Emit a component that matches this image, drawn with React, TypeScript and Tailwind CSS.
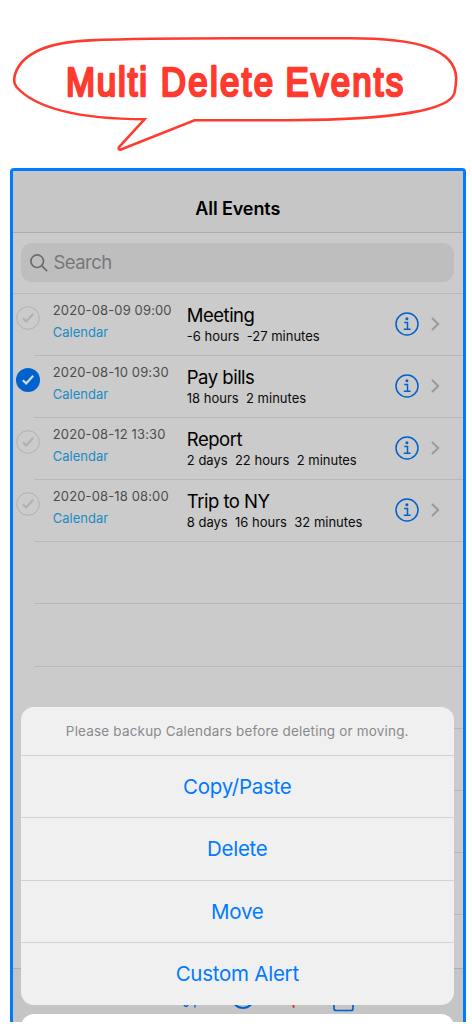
import React from 'react';

type CalendarEvent = {
  date: string;
  calendar: string;
  title: string;
  remaining: string;
  selected?: boolean;
};

const events: CalendarEvent[] = [
  { date: '2020-08-09 09:00', calendar: 'Calendar', title: 'Meeting', remaining: '-6 hours  -27 minutes' },
  { date: '2020-08-10 09:30', calendar: 'Calendar', title: 'Pay bills', remaining: '18 hours  2 minutes', selected: true },
  { date: '2020-08-12 13:30', calendar: 'Calendar', title: 'Report', remaining: '2 days  22 hours  2 minutes' },
  { date: '2020-08-18 08:00', calendar: 'Calendar', title: 'Trip to NY', remaining: '8 days  16 hours  32 minutes' },
];

const actions = ['Copy/Paste', 'Delete', 'Move', 'Custom Alert'];

const CheckMark: React.FC<{ selected?: boolean }> = ({ selected }) => (
  <svg width="24" height="24" viewBox="0 0 24 24" fill="none" className="shrink-0">
    {selected ? (
      <circle cx="12" cy="12" r="12" fill="#0062cd" />
    ) : (
      <circle cx="12" cy="12" r="11.3" stroke="#b1b1b3" strokeWidth="1" />
    )}
    <path d="M6.8 12.2 L10.2 15.4 L17.2 7.8" stroke={selected ? '#d5dbe2' : '#b1b1b1'} strokeWidth="2.2" />
  </svg>
);

const InfoIcon: React.FC = () => (
  <svg width="24" height="24" viewBox="0 0 24 24" fill="none" stroke="#0062cd" className="shrink-0">
    <circle cx="12" cy="12" r="11" strokeWidth="1.5" />
    <circle cx="11.9" cy="6.8" r="1.5" fill="#0062cd" stroke="none" />
    <path d="M9.2 10.4 H12.5 V17 M8.8 17.2 H15.6" strokeWidth="1.5" />
  </svg>
);

const Chevron: React.FC = () => (
  <svg width="9" height="14" viewBox="0 0 9 14" fill="none" className="shrink-0">
    <path d="M1 1 L7.2 7 L1 13" stroke="#9a9a9c" strokeWidth="2" />
  </svg>
);

const EventRow: React.FC<{ event: CalendarEvent }> = ({ event }) => (
  <div className="flex h-[62.1px] pl-[3.5px]">
    <div className="pt-[12px]">
      <CheckMark selected={event.selected} />
    </div>
    <div className="-ml-[6.5px] flex flex-1 border-b border-[#b8b8ba] pl-[19.3px]">
      <div className="w-[134px] pt-[7px] whitespace-nowrap">
        <p className="text-[13px] leading-[18px] tracking-[0.13px] text-[#4d4d4d]">{event.date}</p>
        <p className="mt-[4px] text-[13px] leading-[18px] text-[#1b8cc4]">{event.calendar}</p>
      </div>
      <div className="flex-1 pt-[9px] whitespace-pre">
        <p className="text-[18.5px] leading-[24px] tracking-[-0.5px] text-black">{event.title}</p>
        <p className="text-[13px] leading-[18px] text-[#0a0a0a]">{event.remaining}</p>
      </div>
      <div className="flex items-center gap-[12px] pr-[23px] pb-px">
        <InfoIcon />
        <Chevron />
      </div>
    </div>
  </div>
);

const Banner: React.FC = () => (
  <h1 className="h-[168px]">
    <svg width="472" height="168" viewBox="0 0 472 168" fill="none" className="block">
      <path
        d="M144.5 119.3 C85 119 38 111 16.5 87 C13.5 83.5 13.8 78 15.5 73 C24 50 55 42 90 40.4 C140 38.3 205 38.3 235 38.3 H350 C415 38.3 455 48 456.2 78 C456.2 84 455.5 88 454.5 93 C450 108 405 120 290 120.2 H194.5 L121 149.5 C118.5 150.2 118 148.5 119.5 146.5 Z"
        stroke="#ff3b30"
        strokeWidth="2.6"
      />
      {/* Thick round-joined outline gives the lettering its soft corners */}
      <text
        y="95.7"
        transform="scale(0.87 1)"
        fill="#ff3b30"
        stroke="#ff3b30"
        strokeWidth="2.6"
        strokeLinejoin="round"
        className="font-['Liberation_Sans',sans-serif] text-[40px] font-normal"
      >
        <tspan x="75.9" textLength="93">Multi</tspan>{' '}
        <tspan x="184.8" textLength="129">Delete</tspan>{' '}
        <tspan x="328.2" textLength="135.2">Events</tspan>
      </text>
    </svg>
  </h1>
);

const Toolbar: React.FC = () => (
  <div className="h-[54px] shrink-0 border-t border-[#aeaeb0] bg-[#c5c5c5]">
    <svg width="450" height="52" viewBox="0 0 450 52" fill="none">
      <path d="M171 36 q2 3 4 0 M182 35 v3.5" stroke="#0062cd" strokeWidth="1.4" />
      <circle cx="230" cy="28" r="11" stroke="#0062cd" strokeWidth="2" />
      <path d="M280.5 18 v20.8" stroke="#cc2f26" strokeWidth="1.8" />
      <rect x="321" y="18" width="19" height="23.5" rx="2" stroke="#0062cd" strokeWidth="1.7" />
    </svg>
  </div>
);

const ActionSheet: React.FC = () => (
  <div className="absolute right-[9px] left-[8px] top-[536px]">
    <div className="overflow-hidden rounded-[13px] bg-[#f0f0f0] text-center">
      <p className="h-[48px] text-[13.5px] leading-[49px] tracking-[0.18px] text-[#8a8a8c]">
        Please backup Calendars before deleting or moving.
      </p>
      {actions.map((action) => (
        <button
          key={action}
          className="block h-[62.4px] w-full border-t border-[#d2d4d4] text-[20.5px] leading-[62px] tracking-[-0.25px] text-[#007aff]"
        >
          {action}
        </button>
      ))}
    </div>
    <div className="mt-[9px] h-[60px] rounded-[13px] bg-white" />
  </div>
);

const App: React.FC = () => {
  return (
    <div className="h-[1024px] w-[472px] overflow-hidden bg-white font-['Inter',sans-serif]">
      <Banner />
      {/* Phone screen, cropped at the bottom */}
      <div className="relative ml-[9.5px] flex h-[854px] w-[456.5px] flex-col overflow-hidden rounded-t-[4px] border-[3px] border-b-0 border-[#007aff] bg-[#cbcbcb]">
        <header className="h-[62px] shrink-0 border-b border-[#adadad] bg-[#c6c6c6] pt-[25px] text-center text-[18px] leading-[26px] font-semibold tracking-[-0.1px] text-black">
          All Events
        </header>
        <div className="h-[61px] shrink-0 border-b border-[#b8b8ba] pr-[9px] pl-[8px] pt-[10px]">
          <div className="flex h-[39px] items-center rounded-[11px] bg-[#bebebe] pl-[9px]">
            <svg width="18" height="18" viewBox="0 0 18 18" fill="none" stroke="#6d6d70" strokeWidth="1.7">
              <circle cx="7.2" cy="7.2" r="6.3" />
              <path d="M11.8 11.8 L17.2 17.2" />
            </svg>
            <span className="ml-[6px] text-[18.5px] tracking-[-0.55px] text-[#77777a]">Search</span>
          </div>
        </div>
        <div className="min-h-0 flex-1 overflow-hidden">
          {events.map((event) => (
            <EventRow key={event.title} event={event} />
          ))}
          {[0, 1, 2, 3, 4, 5].map((row) => (
            <div key={row} className="ml-[21px] h-[62.1px] border-b border-[#b8b8ba]" />
          ))}
        </div>
        <Toolbar />
        <ActionSheet />
      </div>
    </div>
  );
};

export default App;
